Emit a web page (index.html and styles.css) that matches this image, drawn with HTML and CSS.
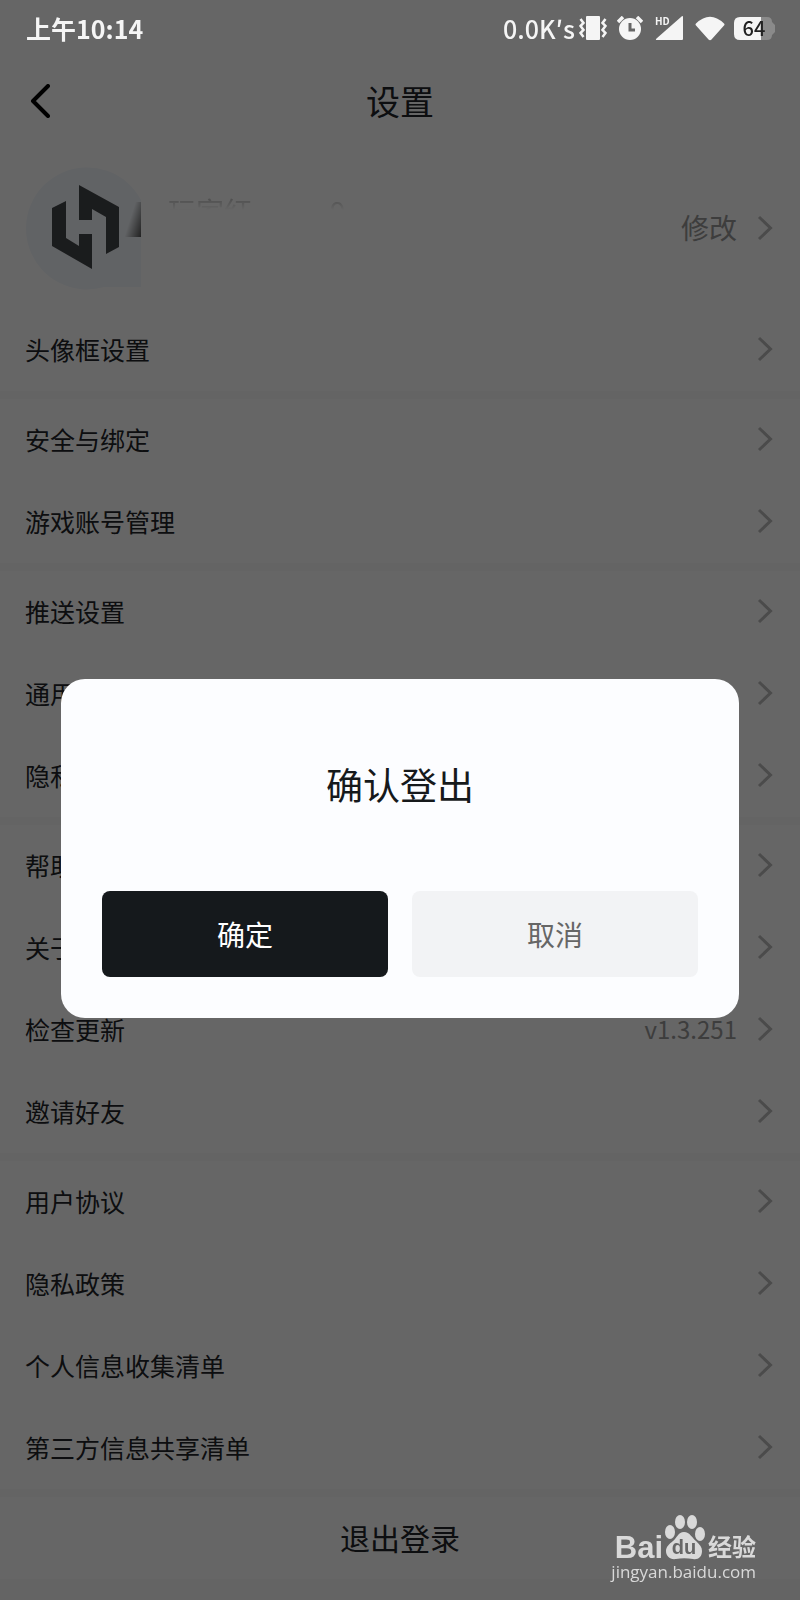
FILE: index.html
```html
<!DOCTYPE html>
<html lang="zh-CN">
<head>
  <meta charset="UTF-8" />
  <meta name="viewport" content="width=device-width, initial-scale=1.0"/>
  <title>设置</title>
  <link rel="stylesheet" href="styles.css">
</head>
<body>
  <!-- shared row arrow -->
  <svg class="defs" width="0" height="0" aria-hidden="true">
    <symbol id="arrow" viewBox="0 0 16 26">
      <path d="M2 2l11.500 11L2 24" fill="none" stroke="currentColor" stroke-width="3"/>
    </symbol>
  </svg>

  <div class="status-bar">
    <span>上午10:14</span>
    <div class="status-icons">
      <span class="speed">0.0K′s</span>
      <svg class="vibrate" width="28" height="24" viewBox="0 0 28 24">
        <rect x="7" y="0" width="14" height="24" rx="1" fill="#f5f5f5"/>
        <path d="M1.500 3l3 4-3 3 3 4-3 3 3 4M26.500 3l-3 4 3 3-3 4 3 3-3 4" fill="none" stroke="#f5f5f5" stroke-width="2.500"/>
      </svg>
      <svg class="alarm" width="26" height="24" viewBox="0 0 26 24">
        <circle cx="13" cy="13" r="11" fill="#f5f5f5"/>
        <path d="M1 6l5-5M25 6l-5-5" stroke="#f5f5f5" stroke-width="3.500"/>
        <path d="M13 7v7h5" fill="none" stroke="#666" stroke-width="3"/>
      </svg>
      <svg class="signal" width="29" height="25" viewBox="0 0 29 25">
        <path d="M28 1v22q0 1-1 1H2q-2 0-.500-1.500L26 1q2-2 2 0z" fill="#f5f5f5"/>
        <text x="0" y="9" class="hd">HD</text>
      </svg>
      <svg class="wifi" width="30" height="25" viewBox="0 0 30 25">
        <path d="M1 7.500Q15-6 29 7.500q1 1 0 2L16.500 23.500q-1.500 1.500-3 0L1 9.500q-1-1 0-2z" fill="#f5f5f5"/>
      </svg>
      <svg class="battery" width="42" height="25" viewBox="0 0 42 25">
        <path d="M27 1h6q5 0 5 5l3 3v7l-3 3q0 5-5 5h-6z" fill="#8a8a8a"/>
        <path d="M27 1H6Q0 1 0 7v11q0 6 6 6h21z" fill="#f5f5f5"/>
        <text x="20" y="20" class="level">64</text>
      </svg>
    </div>
  </div>

  <header class="nav">
    <button class="back" aria-label="返回">
      <svg width="20" height="34" viewBox="0 0 20 34">
        <path d="M18 2L3 17l15 15" fill="none" stroke="#000" stroke-width="4" stroke-linecap="round" stroke-linejoin="round"/>
      </svg>
    </button>
    <h1>设置</h1>
  </header>

  <main>
    <a class="profile" href="#">
      <svg class="avatar" width="120" height="126" viewBox="0 0 120 126">
        <defs>
          <linearGradient id="shade" x1="0" y1="0.300" x2="1" y2="1">
            <stop offset="0.300" stop-color="#555" stop-opacity="0"/>
            <stop offset="1" stop-color="#555"/>
          </linearGradient>
        </defs>
        <path d="M115 35V122H78A61 61 0 1 1 115 35z" fill="#f3f7fc"/>
        <path d="M99 37h16v35H99z" fill="url(#shade)"/>
        <path d="M53 20l40 22v40l-13 7V52l-14-8v11H53zM40 36v37l13 8V69h13v35L26 81V43z" fill="#434649"/>
      </svg>
      <span class="name"><span>玩家红</span><span>9</span></span>
      <span class="edit">修改</span>
      <svg class="arrow"><use href="#arrow"/></svg>
    </a>

    <div class="group">
      <a class="row" href="#">头像框设置<svg class="arrow"><use href="#arrow"/></svg></a>
    </div>
    <div class="group">
      <a class="row" href="#">安全与绑定<svg class="arrow"><use href="#arrow"/></svg></a>
      <a class="row" href="#">游戏账号管理<svg class="arrow"><use href="#arrow"/></svg></a>
    </div>
    <div class="group">
      <a class="row" href="#">推送设置<svg class="arrow"><use href="#arrow"/></svg></a>
      <a class="row" href="#">通用设置<svg class="arrow"><use href="#arrow"/></svg></a>
      <a class="row" href="#">隐私设置<svg class="arrow"><use href="#arrow"/></svg></a>
    </div>
    <div class="group">
      <a class="row" href="#">帮助反馈<svg class="arrow"><use href="#arrow"/></svg></a>
      <a class="row" href="#">关于我们<svg class="arrow"><use href="#arrow"/></svg></a>
      <a class="row" href="#">检查更新<span class="version">v1.3.251</span><svg class="arrow"><use href="#arrow"/></svg></a>
      <a class="row" href="#">邀请好友<svg class="arrow"><use href="#arrow"/></svg></a>
    </div>
    <div class="group">
      <a class="row" href="#">用户协议<svg class="arrow"><use href="#arrow"/></svg></a>
      <a class="row" href="#">隐私政策<svg class="arrow"><use href="#arrow"/></svg></a>
      <a class="row" href="#">个人信息收集清单<svg class="arrow"><use href="#arrow"/></svg></a>
      <a class="row" href="#">第三方信息共享清单<svg class="arrow"><use href="#arrow"/></svg></a>
    </div>
    <button class="logout">退出登录</button>
  </main>

  <div class="mask">
    <div class="dialog" role="dialog" aria-labelledby="dialogTitle">
      <h2 id="dialogTitle">确认登出</h2>
      <div class="actions">
        <button class="confirm">确定</button>
        <button class="cancel">取消</button>
      </div>
    </div>
  </div>

  <div class="watermark">
    <div class="brand">
      <span class="bai">Bai</span>
      <svg width="42" height="46" viewBox="0 0 42 46">
        <g fill="#d9d9d9">
          <ellipse cx="7" cy="18" rx="5" ry="7"/>
          <ellipse cx="17" cy="8" rx="5" ry="7"/>
          <ellipse cx="29" cy="8" rx="5" ry="7"/>
          <ellipse cx="37" cy="20" rx="5" ry="7"/>
          <path d="M21 18c6 0 8 6 12 9 4 4 6 6 6 10 0 6-4 9-9 8-6-1-12-1-17 0-6 1-10-3-10-8 0-4 3-7 7-10 4-3 5-9 11-9z"/>
        </g>
        <text x="21" y="40" class="du">du</text>
      </svg>
      <span class="jingyan">经验</span>
    </div>
    <div class="site">jingyan.baidu.com</div>
  </div>
</body>
</html>
```

FILE: styles.css
```css
* {
  box-sizing: border-box;
}
body {
  margin: 0;
  min-height: 100vh;
  background: #fafafa;
  color: #222528;
  font-family: "Noto Sans CJK SC", sans-serif;
  font-size: 25px;
}
.defs {
  position: absolute;
}
a {
  color: inherit;
  text-decoration: none;
}
button {
  border: none;
  padding: 0;
  font-family: inherit;
  color: inherit;
  cursor: pointer;
}

/* the status bar stays bright above the mask */
.status-bar {
  position: relative;
  z-index: 2;
  display: flex;
  justify-content: space-between;
  align-items: center;
  height: 56px;
  padding: 0 24px 0 26px;
  color: #f5f5f5;
  font-weight: 700;
}
.status-icons {
  display: flex;
  align-items: center;
}
.speed {
  margin-right: 4px;
  font-weight: 500;
}
.vibrate {
  margin-right: 10px;
}
.alarm {
  margin-right: 12px;
}
.signal {
  margin-right: 11px;
  overflow: visible;
}
.wifi {
  margin-right: 9px;
}
.hd {
  font-size: 10px;
  font-weight: 700;
  fill: #f5f5f5;
}
.battery {
  overflow: visible;
}
.level {
  font-size: 20px;
  font-weight: 500;
  text-anchor: middle;
  fill: #222;
}

.nav {
  display: grid;
  grid-template-columns: 60px 1fr 60px;
  align-items: center;
  height: 90px;
  margin-top: -56px;
  padding: 56px 0 0;
  box-sizing: content-box;
  background: #fff;
}
.nav h1 {
  margin: 0;
  padding-bottom: 2px;
  text-align: center;
  font-size: 34px;
  font-weight: 400;
}
.back {
  display: flex;
  padding-left: 30px;
  background: none;
}

.profile {
  display: flex;
  align-items: center;
  height: 163px;
  padding: 0 27px 0 26px;
  background: #fff;
}
.name {
  display: flex;
  align-self: flex-start;
  gap: 78px;
  height: 17px;
  margin: 47px 0 0 22px;
  overflow: hidden;
  color: #aaa;
  font-size: 28px;
  line-height: 36px;
  -webkit-mask-image: linear-gradient(#000, transparent);
  mask-image: linear-gradient(#000, transparent);
}
.edit,
.version {
  margin-left: auto;
  margin-right: 20px;
  color: #999;
}
.edit {
  padding-bottom: 2px;
  font-size: 28px;
}
.version {
  font-size: 24px;
}
.arrow {
  flex: none;
  width: 16px;
  height: 26px;
  color: #bbb;
}

.group {
  margin-bottom: 8px;
  background: #fff;
}
.row {
  display: flex;
  align-items: center;
  height: 82px;
  padding: 0 27px 3px 25px;
}
.row .arrow:only-child {
  margin-left: auto;
}
.logout {
  display: block;
  width: 100%;
  height: 82px;
  padding-bottom: 3px;
  background: #fff;
  font-size: 30px;
}

.mask {
  position: fixed;
  inset: 0;
  z-index: 1;
  display: flex;
  align-items: center;
  padding: 97px 61px 0;
  background: rgba(0, 0, 0, 0.6);
}
.dialog {
  flex: 1;
  padding: 78px 41px 41px;
  border-radius: 24px;
  background: #fcfdff;
  text-align: center;
}
.dialog h2 {
  margin: 0 0 80px;
  font-size: 37px;
  font-weight: 400;
  line-height: 54px;
  color: #16191b;
}
.actions {
  display: flex;
  gap: 24px;
}
.actions button {
  flex: 1;
  height: 86px;
  border-radius: 8px;
  font-size: 28px;
}
.confirm {
  background: #15191c;
  color: #fff;
}
.cancel {
  background: #f2f3f5;
  color: #666;
}

.watermark {
  position: fixed;
  right: 44px;
  bottom: 16px;
  z-index: 2;
  color: #d9d9d9;
}
.brand {
  display: flex;
  align-items: flex-end;
  justify-content: flex-end;
}
.bai {
  font-family: "Liberation Sans", sans-serif;
  font-size: 31px;
  font-weight: 700;
  line-height: 24px;
}
.du {
  font-family: "Liberation Sans", sans-serif;
  font-size: 20px;
  font-weight: 700;
  text-anchor: middle;
  fill: #666;
}
.jingyan {
  margin-left: 3px;
  font-size: 24px;
  font-weight: 700;
  line-height: 28px;
}
.site {
  font-family: "Open Sans", sans-serif;
  font-size: 17px;
  line-height: 24px;
}
```
